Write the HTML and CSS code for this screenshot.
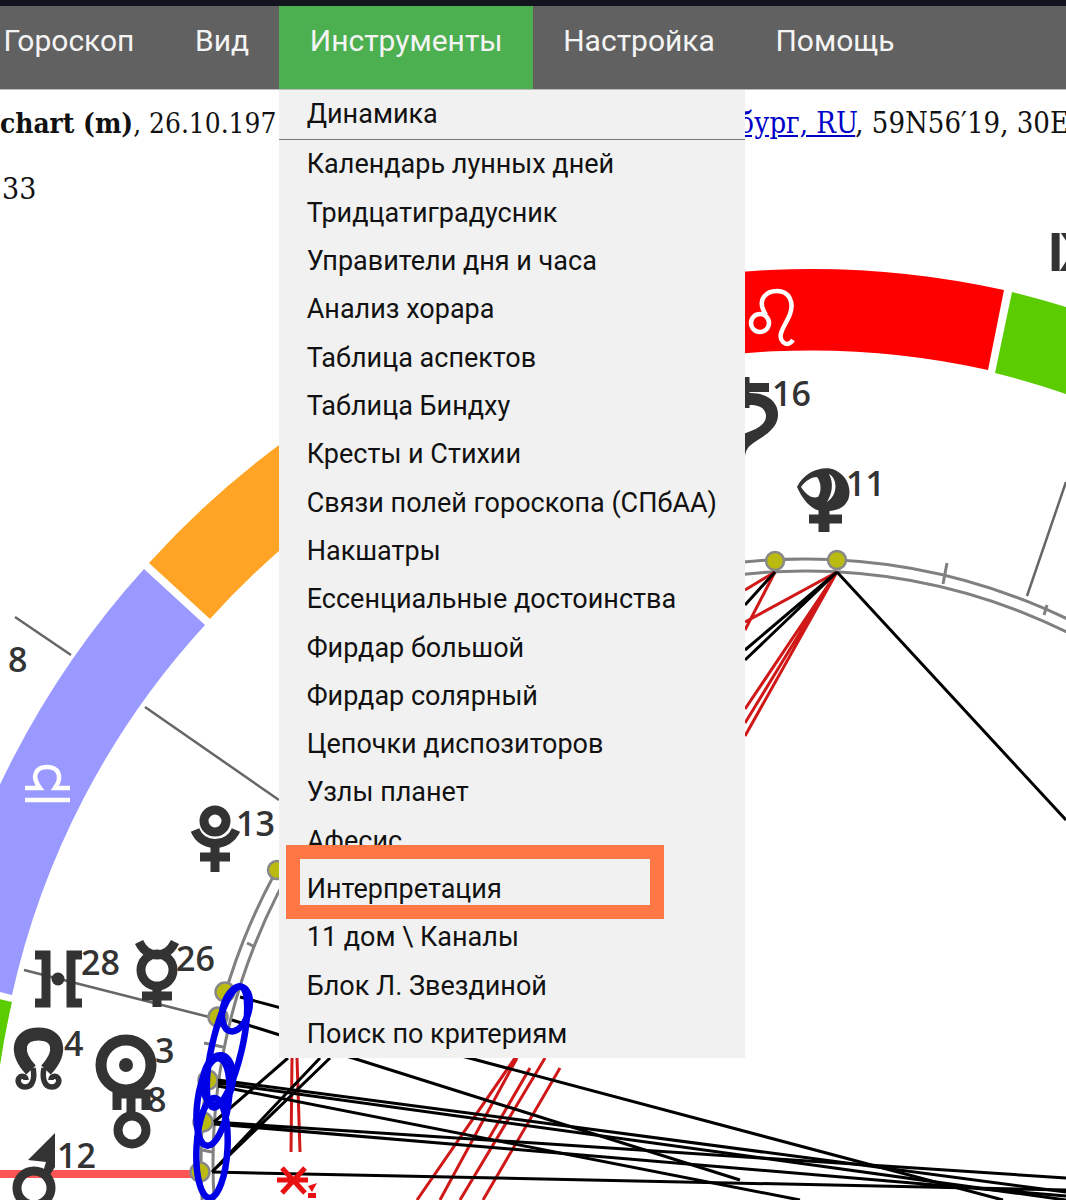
FILE: index.html
```
<!DOCTYPE html>
<html lang="ru">
<head>
<meta charset="utf-8">
<title>Инструменты</title>
<link rel="stylesheet" href="styles.css">
</head>
<body>
<div class="page">
  <svg class="chart" width="1066" height="1200" viewBox="0 0 1066 1200" xmlns="http://www.w3.org/2000/svg">
    <path fill="#f00" d="M538 312A889 889 0 0 1 1004 290L988 370A807 807 0 0 0 562 390Z"/>
    <path fill="#5acc00" d="M1012 292A889 889 0 0 1 1400 499L1345 560A807 807 0 0 0 995 373Z"/>
    <path fill="#ffa424" d="M149 563A889 889 0 0 1 530 315L555 393A807 807 0 0 0 210 619Z"/>
    <path fill="#9999ff" d="M-65 975A889 889 0 0 1 144 569L205 625A807 807 0 0 0 12 995Z"/>
    <path fill="#5acc00" d="M-60 985L12 1002A807 807 0 0 0 -2 1080L-80 1080Z"/>

    <g class="ray">
      <path d="M15 617L71 655"/>
      <path d="M145 707L279 800"/>
      <path d="M24 970L213 1018"/>
      <path d="M1066 482L1027 596"/>
    </g>
    <path class="axis" d="M0 1174H195"/>

    <g class="ring">
      <circle cx="805" cy="1163" r="604"/>
      <circle cx="805" cy="1163" r="592"/>
      <path d="M947 563L943 584M1047 605L1044 615M247 943L255 947M204 1043L223 1047M202 1150L212 1152"/>
    </g>

    <g class="asp-red">
      <path d="M775 572L745 630M775 572L745 590M837 572L745 622M837 572L745 709M837 572L745 723M837 572L745 736"/>
      <path d="M292 1058L291 1152M297 1058L300 1152"/>
      <path d="M515 1058L417 1200M517 1058L440 1200M545 1058L460 1200M560 1068L483 1200M530 1068L488 1140"/>
    </g>

    <g class="dot">
      <circle cx="775" cy="561" r="9"/>
      <circle cx="837" cy="560" r="9"/>
      <circle cx="277" cy="870" r="9"/>
      <circle cx="225" cy="992" r="9.5"/>
      <circle cx="218" cy="1017" r="9.5"/>
      <circle cx="208" cy="1080" r="9.5"/>
      <circle cx="203" cy="1122" r="9.5"/>
      <circle cx="200" cy="1172" r="9.5"/>
    </g>

    <g class="asp-black">
      <path d="M775 572L745 605M837 572L745 650M837 572L745 660M837 572L1066 820"/>
      <path d="M240 997L1003 1200M232 1020L740 1180"/>
      <path d="M218 1080L1066 1192M218 1083L1066 1200M218 1086L800 1200"/>
      <path d="M214 1122L1066 1178M214 1124L1066 1196M212 1172L1066 1190"/>
      <path d="M212 1172L330 1058M212 1172L320 1058M214 1122L288 1058"/>
    </g>

    <g class="blue">
      <ellipse cx="236" cy="1009" rx="13" ry="23" transform="rotate(15 236 1009)"/>
      <ellipse cx="227" cy="1047" rx="15" ry="62" transform="rotate(13 227 1047)"/>
      <ellipse cx="218" cy="1080" rx="15" ry="25" transform="rotate(8 218 1080)"/>
      <ellipse cx="213" cy="1102" rx="15.5" ry="44" transform="rotate(8 213 1102)"/>
      <ellipse cx="212" cy="1148" rx="15.5" ry="50" transform="rotate(3 212 1148)"/>
    </g>

    <path class="node" d="M277 1180H308M282 1168L305 1193M305 1168L282 1193"/>
    <path class="node-fill" d="M308 1186L317 1183L312 1192ZM308 1193H316V1198H308Z"/>

    <g class="glyph-white">
      <circle cx="760" cy="323" r="9"/>
      <path d="M766 315C755 298 768 291 777 291C790 291 794 303 790 314C786 325 776 335 783 342C787 346 791 343 793 340"/>
      <path d="M25 788H40C30 775 37 767 47 767C57 767 64 775 55 788H70M25 800H70"/>
    </g>

    <g class="glyph">
      <path class="solid" d="M740 394C764 390 779 400 778 416C777 430 762 437 752 444C748 447 746 450 745 456L738 456L738 436C748 432 766 428 766 416C766 408 758 403 740 406Z"/>
      <path d="M745 377V408M740 387.5H769"/>
      <path class="solid" d="M797 487C805 470 825 465 835 470C848 476 852 490 848 500C842 512 830 511 822 511C810 510 802 498 797 487Z"/>
      <path class="hole" d="M801 487C806 480 812 477 817 477C821 482 822 491 818 497C811 499 806 494 801 487Z"/>
      <path class="hole" d="M829 474C838 479 838 495 827 502C832 494 834 483 829 474Z"/>
      <path class="heavy" d="M824 508V532"/>
      <path d="M809 519H842"/>
      <circle cx="215" cy="821" r="11"/>
      <path d="M195 830C202 848 228 848 236 830" />
      <path d="M215 842V872M200 857H230"/>
      <path d="M35 955H46V1003H35M82 955H71V1003H82"/>
      <circle class="solid" cx="58" cy="979" r="6.5"/>
      <circle cx="157" cy="970" r="16"/>
      <path d="M139 942C144 952 150 955 157 955C164 955 170 952 175 942M157 986V1007M142 996H172"/>
      <path class="omega" d="M31 1070C14 1052 18 1034 38.5 1034C59 1034 63 1052 46 1070"/>
      <path class="thin" d="M33 1068C35 1078 33 1087 25 1087C19 1087 17 1081 19 1078C21 1075 26 1076 26 1080M44 1068C42 1078 44 1087 52 1087C58 1087 60 1081 58 1078C56 1075 51 1076 51 1080"/>
      <circle class="heavy" cx="126" cy="1065" r="25"/>
      <circle class="solid" cx="126" cy="1065" r="7"/>
      <path d="M117 1110V1094H146V1110M131 1088V1116"/>
      <circle cx="132" cy="1130" r="14"/>
      <circle cx="34" cy="1188" r="17"/>
      <path class="solid" d="M55 1133L28 1160L46 1162L43 1172L50 1175L55 1167Z"/>
    </g>

    <g class="deg">
      <text x="772" y="406">16</text>
      <text x="846" y="496">11</text>
      <text x="8" y="672">8</text>
      <text x="236" y="836">13</text>
      <text x="81" y="975">28</text>
      <text x="176" y="971">26</text>
      <text x="64" y="1056">4</text>
      <text x="155" y="1063">3</text>
      <text x="147" y="1112">8</text>
      <text x="57" y="1168">12</text>
    </g>
    <text class="house" x="1048" y="271">IX</text>
  </svg>

  <div class="topbar"></div>
  <nav class="nav">
    <div class="nav-item">Гороскоп</div>
    <div class="nav-item">Вид</div>
    <div class="nav-item active">Инструменты
      <div class="menu">
        <div class="menu-item first">Динамика</div>
        <div class="menu-item">Календарь лунных дней</div>
        <div class="menu-item">Тридцатиградусник</div>
        <div class="menu-item">Управители дня и часа</div>
        <div class="menu-item">Анализ хорара</div>
        <div class="menu-item">Таблица аспектов</div>
        <div class="menu-item">Таблица Биндху</div>
        <div class="menu-item">Кресты и Стихии</div>
        <div class="menu-item">Связи полей гороскопа (СПбАА)</div>
        <div class="menu-item">Накшатры</div>
        <div class="menu-item">Ессенциальные достоинства</div>
        <div class="menu-item">Фирдар большой</div>
        <div class="menu-item">Фирдар солярный</div>
        <div class="menu-item">Цепочки диспозиторов</div>
        <div class="menu-item">Узлы планет</div>
        <div class="menu-item">Афесис</div>
        <div class="menu-item">Интерпретация</div>
        <div class="menu-item">11 дом \ Каналы</div>
        <div class="menu-item">Блок Л. Звездиной</div>
        <div class="menu-item">Поиск по критериям</div>
        <div class="highlight"></div>
      </div>
    </div>
    <div class="nav-item">Настройка</div>
    <div class="nav-item">Помощь</div>
  </nav>
  <div class="info">
    <div class="info-line"><b>chart (m)</b>, 26.10.197<span class="spacer"></span><span class="coords"><a class="place" href="#">бург, RU</a>, 59N56′19, 30E</span></div>
    <div class="info-line second">33</div>
  </div>
</div>
</body>
</html>
```
FILE: styles.css
```
html, body {
  margin: 0;
  padding: 0;
  background: #fff;
}

.page {
  position: relative;
  width: 1066px;
  height: 1200px;
  overflow: hidden;
  font-family: Roboto, "Noto Sans", sans-serif;
}

.chart {
  position: absolute;
  left: 0;
  top: 0;
}

.topbar {
  position: relative;
  height: 6px;
  background: #14141f;
}

.nav {
  position: relative;
  display: flex;
  height: 83px;
  margin-bottom: 1px;
  background: #616161;
  box-shadow: 0 1px 0 #bbb;
  color: #f4f4f4;
  font-size: 30px;
  line-height: 70px;
}

.nav-item {
  position: relative;
  padding: 0 30.3px;
  white-space: nowrap;
}

.nav-item:first-child {
  padding-left: 3.4px;
}

.nav-item.active {
  background: #4caf50;
}

.menu {
  position: absolute;
  left: 0;
  top: 84px;
  z-index: 2;
  width: 466px;
  background: #f1f1f1;
  color: #111;
  font-size: 27px;
  line-height: 48px;
}

.menu-item {
  box-sizing: border-box;
  height: 48.32px;
  padding-left: 27.3px;
}

.menu-item.first {
  height: 50.4px;
  border-bottom: 1.5px solid #777;
}

.menu-item:nth-child(n+2) {
  line-height: 49.6px;
}

.highlight {
  position: absolute;
  left: 7px;
  top: 755px;
  box-sizing: border-box;
  width: 378px;
  height: 74px;
  border: 14px solid #ff7744;
}

.info {
  position: relative;
  font-family: "DejaVu Serif Condensed", "DejaVu Serif", serif;
  font-size: 27.8px;
  color: #111;
}

.info-line {
  box-sizing: border-box;
  height: 66px;
  padding-top: 15px;
  line-height: 36px;
  white-space: nowrap;
}

.info-line.second {
  padding-left: 2px;
  font-size: 30px;
}

.coords {
  font-size: 29px;
}

.spacer {
  display: inline-block;
  width: 462px;
}

.place {
  color: #0000c8;
  text-decoration: underline;
}

.ray path { fill: none; stroke: #666; stroke-width: 2.5; }
.axis { fill: none; stroke: #ff5555; stroke-width: 8; }
.ring circle, .ring path { fill: none; stroke: #808080; stroke-width: 3; }
.asp-red path { fill: none; stroke: #d01818; stroke-width: 3; }
.asp-black path { fill: none; stroke: #000; stroke-width: 3; }
.dot circle { fill: #baba10; stroke: #888; stroke-width: 2.5; }
.blue ellipse { fill: none; stroke: #0000e6; stroke-width: 6.5; }
.node { fill: none; stroke: #e81010; stroke-width: 5; }
.node-fill { fill: #e81010; }
.glyph-white circle, .glyph-white path { fill: none; stroke: #fff; stroke-width: 4.5; }
.glyph circle, .glyph path { fill: none; stroke: #333; stroke-width: 9; }
.glyph .solid { fill: #333; stroke: none; }
.glyph .hole { fill: #fff; stroke: none; }
.glyph .thin { stroke-width: 5.5; }
.glyph .heavy { stroke-width: 11; }
.glyph .omega { stroke-width: 13; }
.deg text {
  font-family: "Open Sans", sans-serif;
  font-weight: 600;
  font-size: 34px;
  fill: #333;
}
.house {
  font-family: "Liberation Sans", sans-serif;
  font-weight: 700;
  font-size: 55px;
  letter-spacing: -4px;
  fill: #333;
}
```
